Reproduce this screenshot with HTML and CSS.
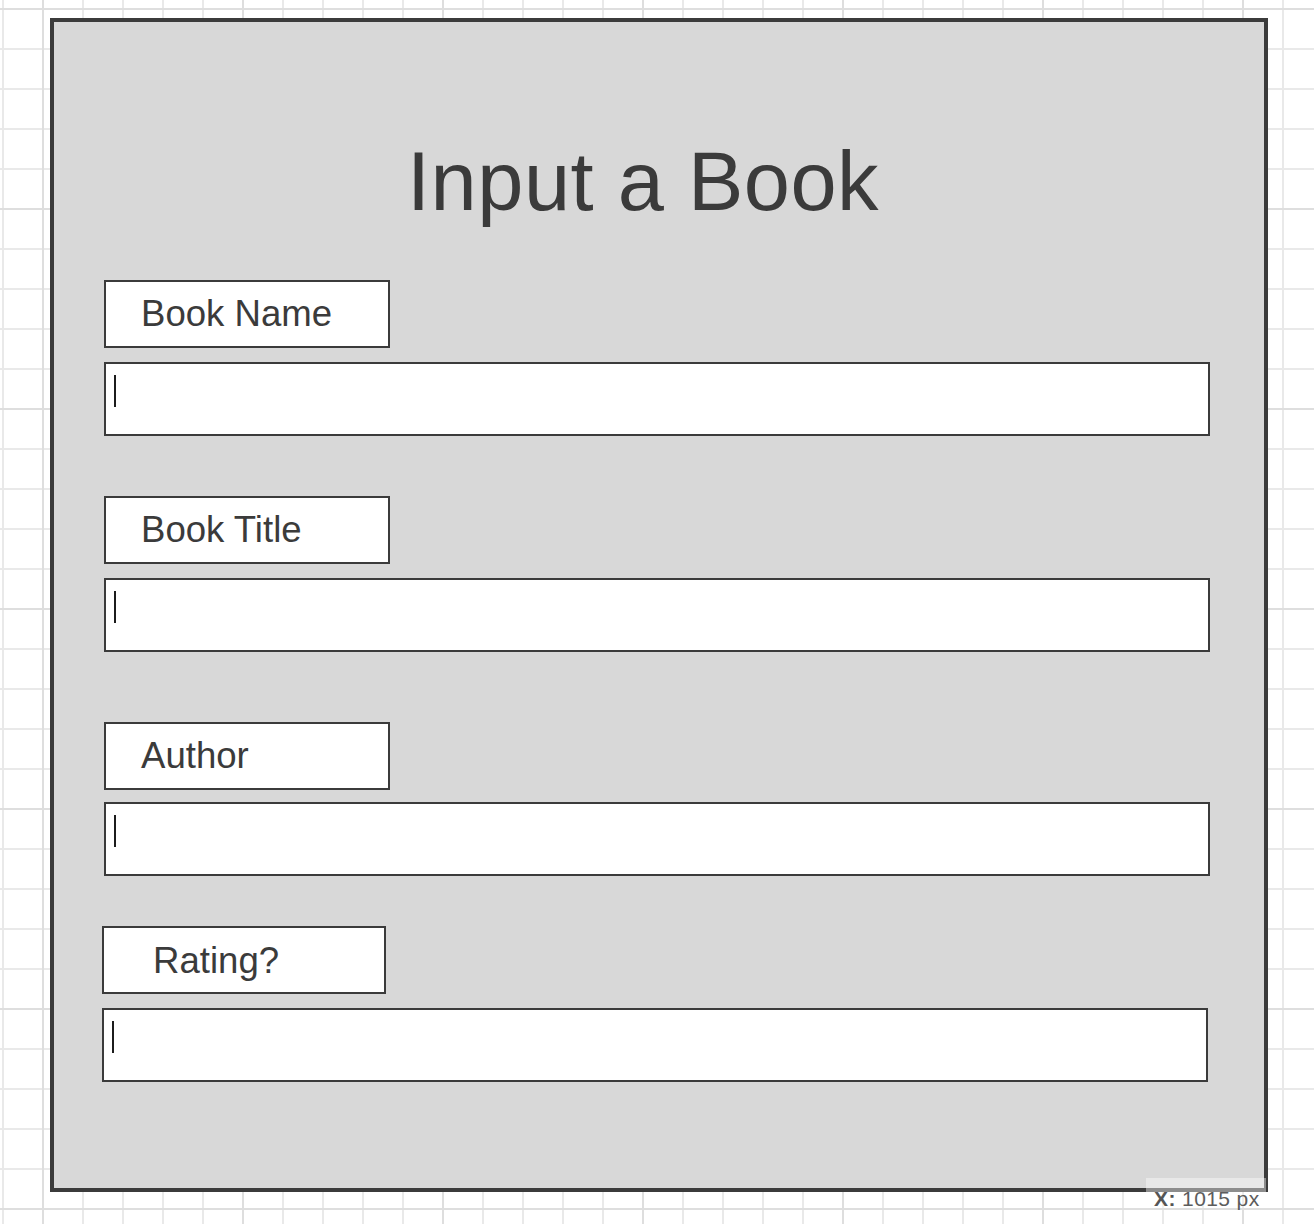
FILE: index.html
```html
<!DOCTYPE html>
<html lang="en">
<head>
<meta charset="utf-8">
<title>Input a Book</title>
<link rel="stylesheet" href="styles.css">
</head>
<body>
  <div class="canvas">
    <section class="frame">
      <h1 class="title">Input a Book</h1>

      <div class="field field-name">
        <div class="label">Book Name</div>
        <div class="input"><span class="caret"></span></div>
      </div>

      <div class="field field-title">
        <div class="label">Book Title</div>
        <div class="input"><span class="caret"></span></div>
      </div>

      <div class="field field-author">
        <div class="label">Author</div>
        <div class="input"><span class="caret"></span></div>
      </div>

      <div class="field field-rating">
        <div class="label">Rating?</div>
        <div class="input"><span class="caret"></span></div>
      </div>
    </section>

    <div class="coord-tip"><b>X:</b> 1015 px</div>
  </div>
</body>
</html>
```

FILE: styles.css
```css
html, body {
  margin: 0;
  padding: 0;
}

body {
  width: 1314px;
  height: 1224px;
  overflow: hidden;
  font-family: "Liberation Sans", Arial, sans-serif;
  color: #3b3b3b;
  background-color: #ffffff;
  background-image:
    linear-gradient(to right, #dedede 2px, transparent 2px),
    linear-gradient(to bottom, #dedede 2px, transparent 2px),
    linear-gradient(to right, #e9e9e9 2px, transparent 2px),
    linear-gradient(to bottom, #e9e9e9 2px, transparent 2px);
  background-size: 200px 200px, 200px 200px, 40px 40px, 40px 40px;
  background-position: 42px 0, 0 8px, 2px 0, 0 8px;
}

.canvas {
  position: relative;
  width: 1314px;
  height: 1224px;
  padding-top: 18px;
  box-sizing: border-box;
}

.frame {
  margin-left: 50px;
  width: 1218px;
  height: 1174px;
  box-sizing: border-box;
  border: 4px solid #3b3b3b;
  background: #d8d8d8;
  padding-left: 50px;
  display: flex;
  flex-direction: column;
  align-items: flex-start;
}

.title {
  margin: 118px 0 0 303px;
  font-size: 83px;
  line-height: 83px;
  letter-spacing: 0.5px;
  font-weight: normal;
  color: #3b3b3b;
  white-space: nowrap;
}

.field {
  display: flex;
  flex-direction: column;
  align-items: flex-start;
}

.field-name { margin-top: 57px; }
.field-title { margin-top: 60px; }
.field-author { margin-top: 70px; }
.field-rating { margin-top: 50px; margin-left: -2px; }

.label {
  width: 286px;
  height: 68px;
  box-sizing: border-box;
  border: 2px solid #3b3b3b;
  background: #ffffff;
  padding-left: 35px;
  font-size: 36.6px;
  line-height: 64px;
  color: #3b3b3b;
  white-space: nowrap;
}

.field-rating .label {
  width: 284px;
  padding-left: 49px;
  padding-top: 2px;
  line-height: 62px;
}

.input {
  margin-top: 14px;
  width: 1106px;
  height: 74px;
  box-sizing: border-box;
  border: 2px solid #3b3b3b;
  background: #ffffff;
  padding: 11px 0 0 8px;
}

.field-author .input { margin-top: 12px; }

.caret {
  display: block;
  width: 2px;
  height: 32px;
  background: #1c1c1c;
}

.coord-tip {
  position: absolute;
  left: 1146px;
  top: 1178px;
  width: 120px;
  height: 30px;
  box-sizing: border-box;
  padding: 11px 0 0 8px;
  background: rgba(255, 255, 255, 0.42);
  font-family: "Liberation Sans", Arial, sans-serif;
  font-size: 21px;
  line-height: 20px;
  letter-spacing: 0.4px;
  color: #5c5c5c;
  white-space: nowrap;
}

.coord-tip b {
  color: #555555;
}
```
